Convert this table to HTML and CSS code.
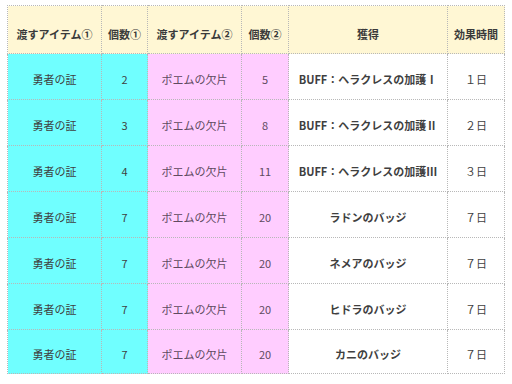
FILE: index.html
```html
<!DOCTYPE html>
<html lang="ja">
<head>
<meta charset="utf-8">
<link rel="stylesheet" href="styles.css">
</head>
<body>
<table class="trade">
  <colgroup>
    <col class="c1"><col class="c2"><col class="c3"><col class="c4"><col class="c5"><col class="c6">
  </colgroup>
  <thead>
    <tr>
      <th>渡すアイテム①</th><th>個数①</th><th>渡すアイテム②</th><th>個数②</th><th>獲得</th><th>効果時間</th>
    </tr>
  </thead>
  <tbody>
    <tr><td class="cyan">勇者の証</td><td class="cyan">2</td><td class="pink">ポエムの欠片</td><td class="pink">5</td><td class="bold">BUFF：ヘラクレスの加護Ⅰ</td><td>１日</td></tr>
    <tr><td class="cyan">勇者の証</td><td class="cyan">3</td><td class="pink">ポエムの欠片</td><td class="pink">8</td><td class="bold">BUFF：ヘラクレスの加護Ⅱ</td><td>２日</td></tr>
    <tr><td class="cyan">勇者の証</td><td class="cyan">4</td><td class="pink">ポエムの欠片</td><td class="pink">11</td><td class="bold">BUFF：ヘラクレスの加護Ⅲ</td><td>３日</td></tr>
    <tr><td class="cyan">勇者の証</td><td class="cyan">7</td><td class="pink">ポエムの欠片</td><td class="pink">20</td><td class="bold">ラドンのバッジ</td><td>７日</td></tr>
    <tr><td class="cyan">勇者の証</td><td class="cyan">7</td><td class="pink">ポエムの欠片</td><td class="pink">20</td><td class="bold">ネメアのバッジ</td><td>７日</td></tr>
    <tr><td class="cyan">勇者の証</td><td class="cyan">7</td><td class="pink">ポエムの欠片</td><td class="pink">20</td><td class="bold">ヒドラのバッジ</td><td>７日</td></tr>
    <tr class="last"><td class="cyan">勇者の証</td><td class="cyan">7</td><td class="pink">ポエムの欠片</td><td class="pink">20</td><td class="bold">カニのバッジ</td><td>７日</td></tr>
  </tbody>
</table>
</body>
</html>
```
FILE: styles.css
```css
html, body {
  background: #ffffff;
}
body {
  margin: 0;
  padding: 5px 8px 0 7px;
  font-family: "Noto Sans CJK JP", "Noto Sans", sans-serif;
  font-size: 11px;
  color: #3f3f3f;
}
.trade {
  border-collapse: collapse;
  table-layout: fixed;
  width: 497px;
}
.c1 { width: 94px; }
.c2 { width: 46px; }
.c3 { width: 94px; }
.c4 { width: 47px; }
.c5 { width: 159px; }
.c6 { width: 57px; }
.trade th,
.trade td {
  border: 1px dotted #b8b8b8;
  text-align: center;
  vertical-align: middle;
  padding: 0;
  line-height: 16px;
}
.trade th {
  height: 39px;
  padding-top: 8px;
  background: #fff7d4;
  font-weight: bold;
  color: #3a3a3a;
}
.trade td {
  height: 41px;
  padding-top: 4px;
}
.trade tr.last td {
  height: 39px;
}
.trade td.cyan {
  background: #70ffff;
}
.trade td.pink {
  background: #ffcdff;
  color: #604a60;
}
.trade td.bold {
  font-weight: bold;
}
```
